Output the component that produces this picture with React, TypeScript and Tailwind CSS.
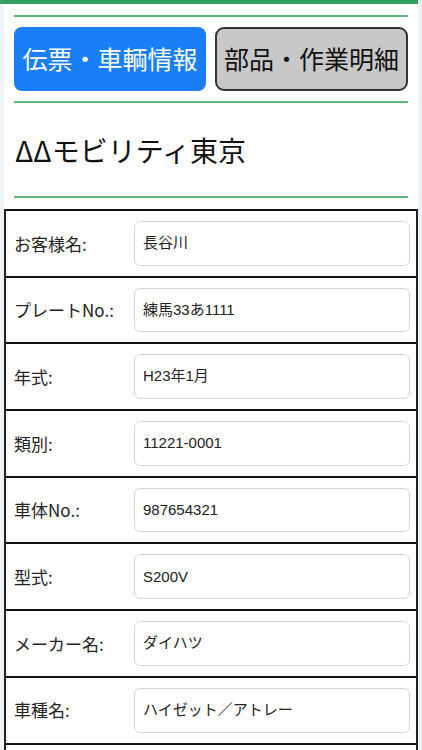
import React from "react";

const rows: [string, string][] = [
  ["お客様名:", "長谷川"],
  ["プレートNo.:", "練馬33あ1111"],
  ["年式:", "H23年1月"],
  ["類別:", "11221-0001"],
  ["車体No.:", "987654321"],
  ["型式:", "S200V"],
  ["メーカー名:", "ダイハツ"],
  ["車種名:", "ハイゼット／アトレー"],
  ["", ""],
];

export default function App() {
  return (
    <div
      className="w-[422px] h-[750px] overflow-hidden bg-[#eef3fa]"
      style={{ fontFamily: '"Noto Sans CJK JP", "Noto Sans", sans-serif' }}
    >
      <div className="w-[418px] h-[4px] bg-[#34a160]" />
      <div className="ml-[4px] w-[414px] bg-white">
        <div className="px-[10px] pt-[11px]">
          <div className="h-[2px] bg-[#5cb77a]" />
          <div className="flex gap-[9px] mt-[10px]">
            <div className="w-[193px] h-[64px] rounded-[8px] bg-[#1a7ff7] text-white text-[25px] flex items-center justify-center">
              伝票・車輌情報
            </div>
            <div className="w-[194px] h-[64px] rounded-[9px] bg-[#c8c8c8] border-2 border-[#333] text-[#111] text-[25px] flex items-center justify-center">
              部品・作業明細
            </div>
          </div>
          <div className="h-[2px] bg-[#5cb77a] mt-[10px]" />
          <div className="h-[93px] flex items-center text-[28px] text-[#111] pl-[1px]">
            ΔΔモビリティ東京
          </div>
          <div className="h-[2px] bg-[#5cb77a]" />
        </div>
        <div className="mt-[11px] border-x-2 border-[#222]">
          {rows.map(([label, value], i) => (
            <div
              key={i}
              className="flex items-center border-t-2 border-[#111] pt-[10px] pb-[10px] pl-[8px] pr-[6px]"
            >
              <div className="w-[120px] text-[17px] text-[#222]">{label}</div>
              <div
                className="flex-1 h-[44.7px] rounded-[6px] border border-[#d4d4d4] flex items-center pl-[8px] text-[15px] text-[#222]"
                style={{ fontFamily: '"Liberation Sans", "Noto Sans CJK JP", sans-serif' }}
              >
                {value}
              </div>
            </div>
          ))}
        </div>
      </div>
    </div>
  );
}
